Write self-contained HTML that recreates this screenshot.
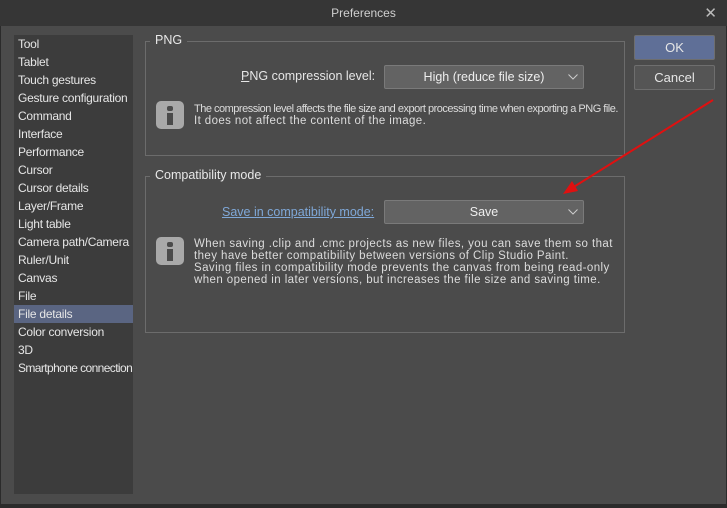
<!DOCTYPE html><html><head><style>
body{margin:0;width:727px;height:508px;background:#2b2b2b;font-family:"Liberation Sans","Noto Sans CJK KR",sans-serif;color:#e6e6e6;position:relative;overflow:hidden;font-size:12.5px}
.a{position:absolute}
.title{left:0;top:0;width:727px;height:26px;background:#363636;text-align:center;line-height:27px;font-size:12px;color:#cfcfcf}
.body{left:1px;top:26px;width:725px;height:478px;background:#4b4b4b}
.side{left:14px;top:35px;width:119px;height:459px;background:#3c3c3c;font-size:12px;letter-spacing:-0.25px}
.side div{height:18px;line-height:18px;padding-left:4px;white-space:nowrap;overflow:hidden}
.sel{background:#5a6582}
.grp{border:1px solid #6c6c6c}
.leg{background:#4b4b4b;padding:0 5px;font-size:12.5px;color:#e8e8e8}
.dd{background:#636363;border:1px solid #7a7a7a;border-radius:2px;text-align:center;line-height:22px;color:#eee}
.dd svg{position:absolute;right:5px;top:8px}
.ic{width:28px;height:28px;background:#a9a9a9;border-radius:5px}
.ic:before{content:"";position:absolute;left:11px;top:5px;width:6px;height:5px;background:#4b4b4b;border-radius:2px}
.ic:after{content:"";position:absolute;left:11px;top:12px;width:6px;height:12px;background:#4b4b4b}
.txt{font-size:11.5px;line-height:12px;color:#dcdcdc;white-space:nowrap}
.btn{width:79px;height:23px;border:1px solid #6e6e6e;border-radius:2px;text-align:center;line-height:23px;font-size:13px}
</style></head><body>
<div class="a title">Preferences</div>
<div class="a" style="right:10px;top:4px;font-size:15px;color:#bbb">✕</div>
<div class="a body"></div>
<div class="a side">
<div style="margin-top:0">Tool</div><div>Tablet</div><div>Touch gestures</div><div>Gesture configuration</div><div>Command</div><div>Interface</div><div>Performance</div><div>Cursor</div><div>Cursor details</div><div>Layer/Frame</div><div>Light table</div><div>Camera path/Camera</div><div>Ruler/Unit</div><div>Canvas</div><div>File</div><div class="sel">File details</div><div>Color conversion</div><div>3D</div><div style="letter-spacing:-0.6px">Smartphone connection</div>
</div>
<div class="a grp" style="left:145px;top:41px;width:478px;height:113px"></div>
<div class="a leg" style="left:150px;top:33px">PNG</div>
<div class="a" style="left:241px;top:69px"><u>P</u>NG compression level:</div>
<div class="a dd" style="left:384px;top:65px;width:198px;height:22px">High (reduce file size)<svg width="10" height="6"><path d="M0.5 0.5L5 5L9.5 0.5" stroke="#ccc" fill="none"/></svg></div>
<div class="a ic" style="left:156px;top:101px"></div>
<div class="a txt" style="left:194px;top:103px;letter-spacing:-0.5px;font-size:11px">The compression level affects the file size and export processing time when exporting a PNG file.</div>
<div class="a txt" style="left:194px;top:115px;letter-spacing:0.4px">It does not affect the content of the image.</div>
<div class="a grp" style="left:145px;top:176px;width:478px;height:155px"></div>
<div class="a leg" style="left:150px;top:168px">Compatibility mode</div>
<div class="a" style="left:222px;top:205px;color:#7fa8d8;text-decoration:underline">Save in compatibility mode:</div>
<div class="a dd" style="left:384px;top:200px;width:198px;height:22px">Save<svg width="10" height="6"><path d="M0.5 0.5L5 5L9.5 0.5" stroke="#ccc" fill="none"/></svg></div>
<div class="a ic" style="left:156px;top:237px"></div>
<div class="a txt" style="left:194px;top:238px;letter-spacing:0.42px">When saving .clip and .cmc projects as new files, you can save them so that<br>they have better compatibility between versions of Clip Studio Paint.<br>Saving files in compatibility mode prevents the canvas from being read-only<br>when opened in later versions, but increases the file size and saving time.</div>
<div class="a btn" style="left:634px;top:35px;background:#5f6f97">OK</div>
<div class="a btn" style="left:634px;top:65px;background:#555">Cancel</div>
<svg class="a" style="left:0;top:0" width="727" height="508"><line x1="713" y1="100" x2="572" y2="188" stroke="#e01010" stroke-width="2"/><polygon points="563,194 572,181 578,191" fill="#e01010"/></svg>
</body></html>
